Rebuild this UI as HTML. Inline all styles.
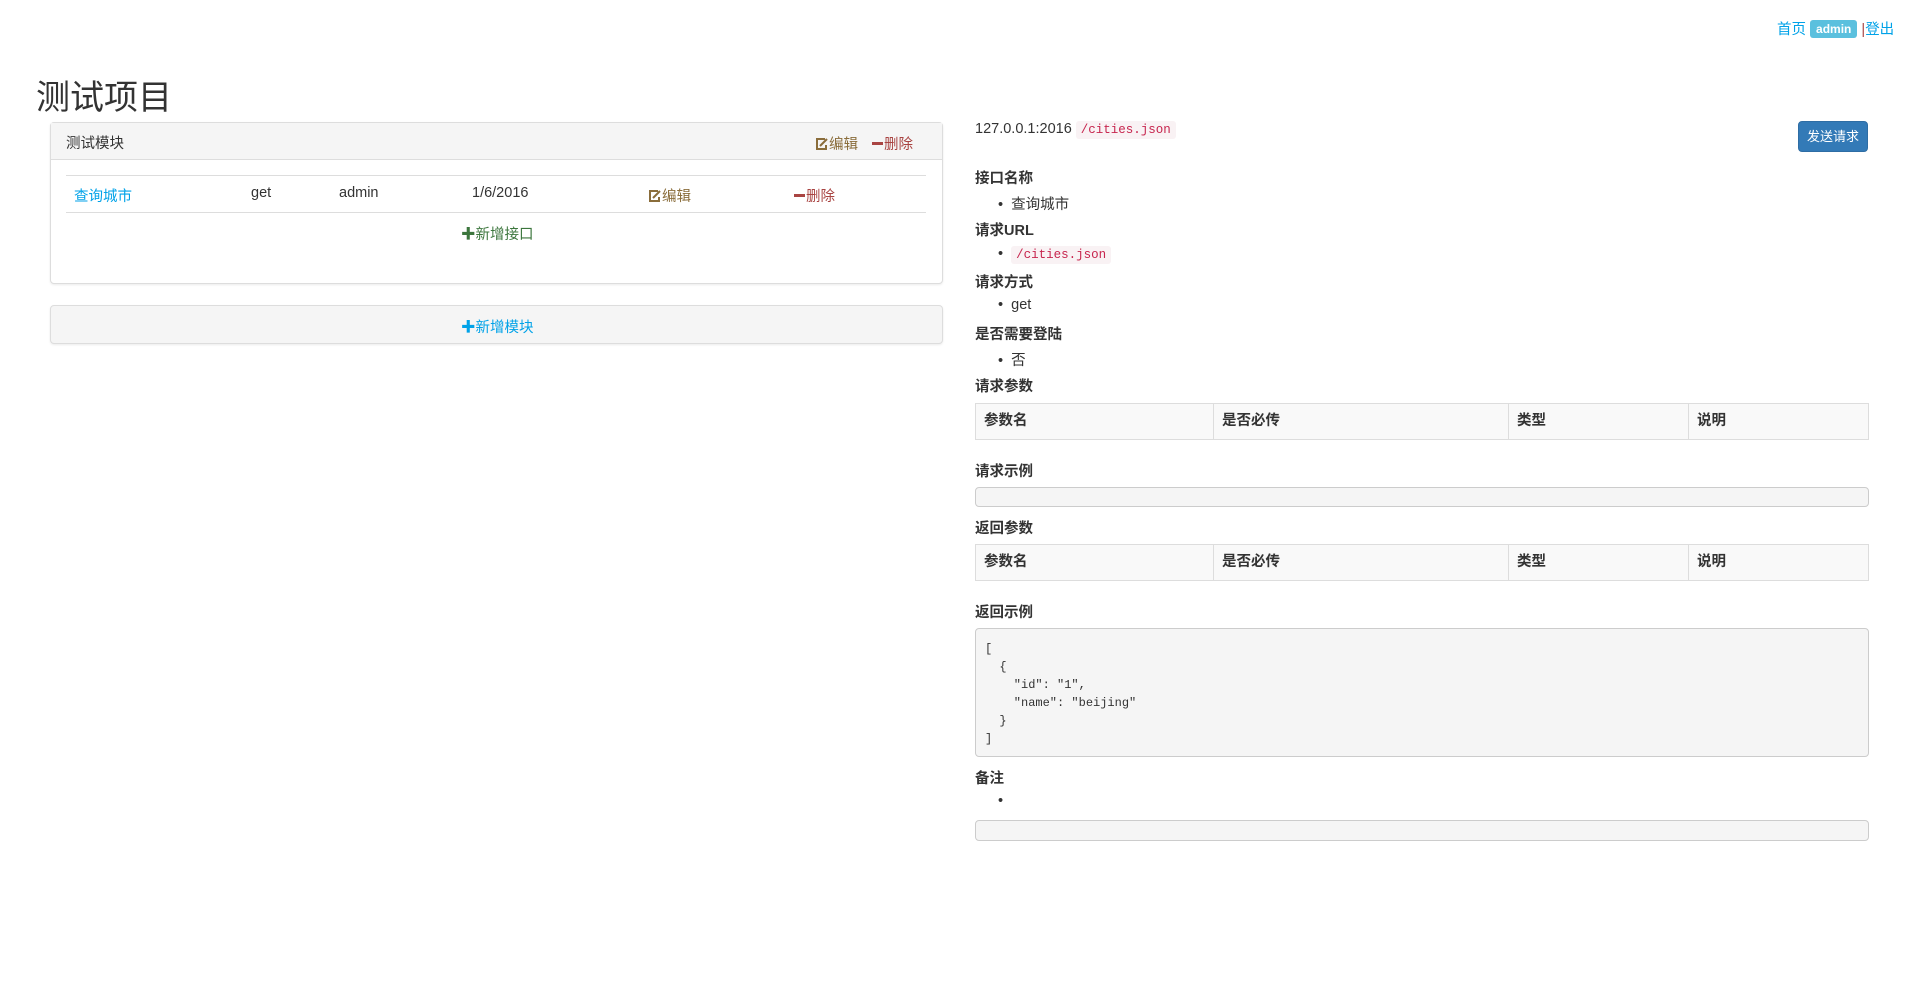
<!DOCTYPE html>
<html><head><meta charset="utf-8">
<style>
*{box-sizing:border-box;margin:0;padding:0}
body{width:1913px;height:995px;background:#fff;font-family:"Liberation Sans","Noto Sans CJK SC",sans-serif;font-size:14.5px;color:#333;position:relative;overflow:hidden}
.a{position:absolute;white-space:nowrap}
.blue{color:#00a2e8}
.panel{position:absolute;border:1px solid #ddd;border-radius:4px;background:#fff;box-shadow:0 1px 2px rgba(0,0,0,.08)}
.ph{background:#f5f5f5;border-bottom:1px solid #ddd;height:37px}
.code{font-family:"Liberation Mono",monospace;font-size:12.5px;color:#c7254e;background:#f9f2f4;padding:2px 5px;border-radius:3px}
.h{font-weight:bold;color:#333}
.tbl{position:absolute;left:975px;width:894px;height:37px;border:1px solid #ddd;background:#f9f9f9;font-weight:bold}
.tbl div{position:absolute;top:0;height:35px;line-height:35px;padding-left:8px;border-left:1px solid #ddd}
.pre{position:absolute;left:975px;width:894px;background:#f5f5f5;border:1px solid #ccc;border-radius:4px}
.edit{color:#8a6d3b}.del{color:#a94442}
.ic{display:inline-block;vertical-align:-2px;margin-right:1px}
</style></head><body>
<div class="a" style="left:1777px;top:18px;font-size:14.5px"><span class="blue">首页</span> <span style="background:#5bc0de;color:#fff;font-weight:bold;font-size:12px;padding:2px 6px;border-radius:3px;position:relative;top:-1px">admin</span> <span style="color:#a94442">|</span><span class="blue">登出</span></div>

<div class="a" style="left:36px;top:70px;font-size:34px;color:#333">测试项目</div>

<div class="panel" style="left:50px;top:122px;width:893px;height:162px">
 <div class="ph"><span class="a" style="left:15px;top:9px">测试模块</span>
  <span class="a edit" style="left:764px;top:10px"><svg class="ic" width="13" height="13" viewBox="0 0 13 13"><path d="M10 1H2v10h9V7" fill="none" stroke="#8a6d3b" stroke-width="2"/><path d="M5 8l7-7" stroke="#8a6d3b" stroke-width="2"/></svg>编辑</span>
  <span class="a del" style="left:821px;top:10px"><span style="display:inline-block;width:11px;height:3px;background:#a94442;vertical-align:4px;margin-right:1px"></span>删除</span>
 </div>
 <div class="a" style="left:15px;top:52px;width:860px;border-top:1px solid #ddd"></div>
 <div class="a" style="left:15px;top:89px;width:860px;border-top:1px solid #ddd"></div>
 <span class="a blue" style="left:23px;top:62px">查询城市</span>
 <span class="a" style="left:200px;top:62px">get</span>
 <span class="a" style="left:288px;top:62px">admin</span>
 <span class="a" style="left:421px;top:62px">1/6/2016</span>
 <span class="a edit" style="left:597px;top:62px"><svg class="ic" width="13" height="13" viewBox="0 0 13 13"><path d="M10 1H2v10h9V7" fill="none" stroke="#8a6d3b" stroke-width="2"/><path d="M5 8l7-7" stroke="#8a6d3b" stroke-width="2"/></svg>编辑</span>
 <span class="a del" style="left:743px;top:62px"><span style="display:inline-block;width:11px;height:3px;background:#a94442;vertical-align:4px;margin-right:1px"></span>删除</span>
 <span class="a" style="left:410px;top:100px;color:#3c763d">✚新增接口</span>
</div>

<div class="panel" style="left:50px;top:305px;width:893px;height:39px;background:#f5f5f5">
 <span class="a blue" style="left:410px;top:10px">✚新增模块</span>
</div>

<div class="a" style="left:975px;top:121px">127.0.0.1:2016 <span class="code">/cities.json</span></div>
<div class="a" style="left:1798px;top:121px;width:70px;height:31px;background:#337ab7;border:1px solid #2e6da4;border-radius:4px;color:#fff;font-size:13px;text-align:center;line-height:29px">发送请求</div>

<div class="a h" style="left:975px;top:167px">接口名称</div>
<div class="a" style="left:998px;top:193px">•&nbsp;&nbsp;查询城市</div>
<div class="a h" style="left:975px;top:219px">请求URL</div>
<div class="a" style="left:998px;top:246px">•&nbsp;&nbsp;<span class="code">/cities.json</span></div>
<div class="a h" style="left:975px;top:271px">请求方式</div>
<div class="a" style="left:998px;top:297px">•&nbsp;&nbsp;get</div>
<div class="a h" style="left:975px;top:323px">是否需要登陆</div>
<div class="a" style="left:998px;top:349px">•&nbsp;&nbsp;否</div>
<div class="a h" style="left:975px;top:375px">请求参数</div>
<div class="tbl" style="top:403px"><div style="left:0;border-left:0">参数名</div><div style="left:237px">是否必传</div><div style="left:532px">类型</div><div style="left:712px">说明</div></div>
<div class="a h" style="left:975px;top:460px">请求示例</div>
<div class="pre" style="top:487px;height:20px"></div>
<div class="a h" style="left:975px;top:517px">返回参数</div>
<div class="tbl" style="top:544px"><div style="left:0;border-left:0">参数名</div><div style="left:237px">是否必传</div><div style="left:532px">类型</div><div style="left:712px">说明</div></div>
<div class="a h" style="left:975px;top:601px">返回示例</div>
<div class="pre" style="top:628px;height:129px"><pre style="font-family:'Liberation Mono',monospace;font-size:12px;line-height:18px;color:#333;padding:11px 0 0 9px">[
  {
    "id": "1",
    "name": "beijing"
  }
]</pre></div>
<div class="a h" style="left:975px;top:767px">备注</div>
<div class="a" style="left:998px;top:793px">•</div>
<div class="pre" style="top:820px;height:21px"></div>
</body></html>
